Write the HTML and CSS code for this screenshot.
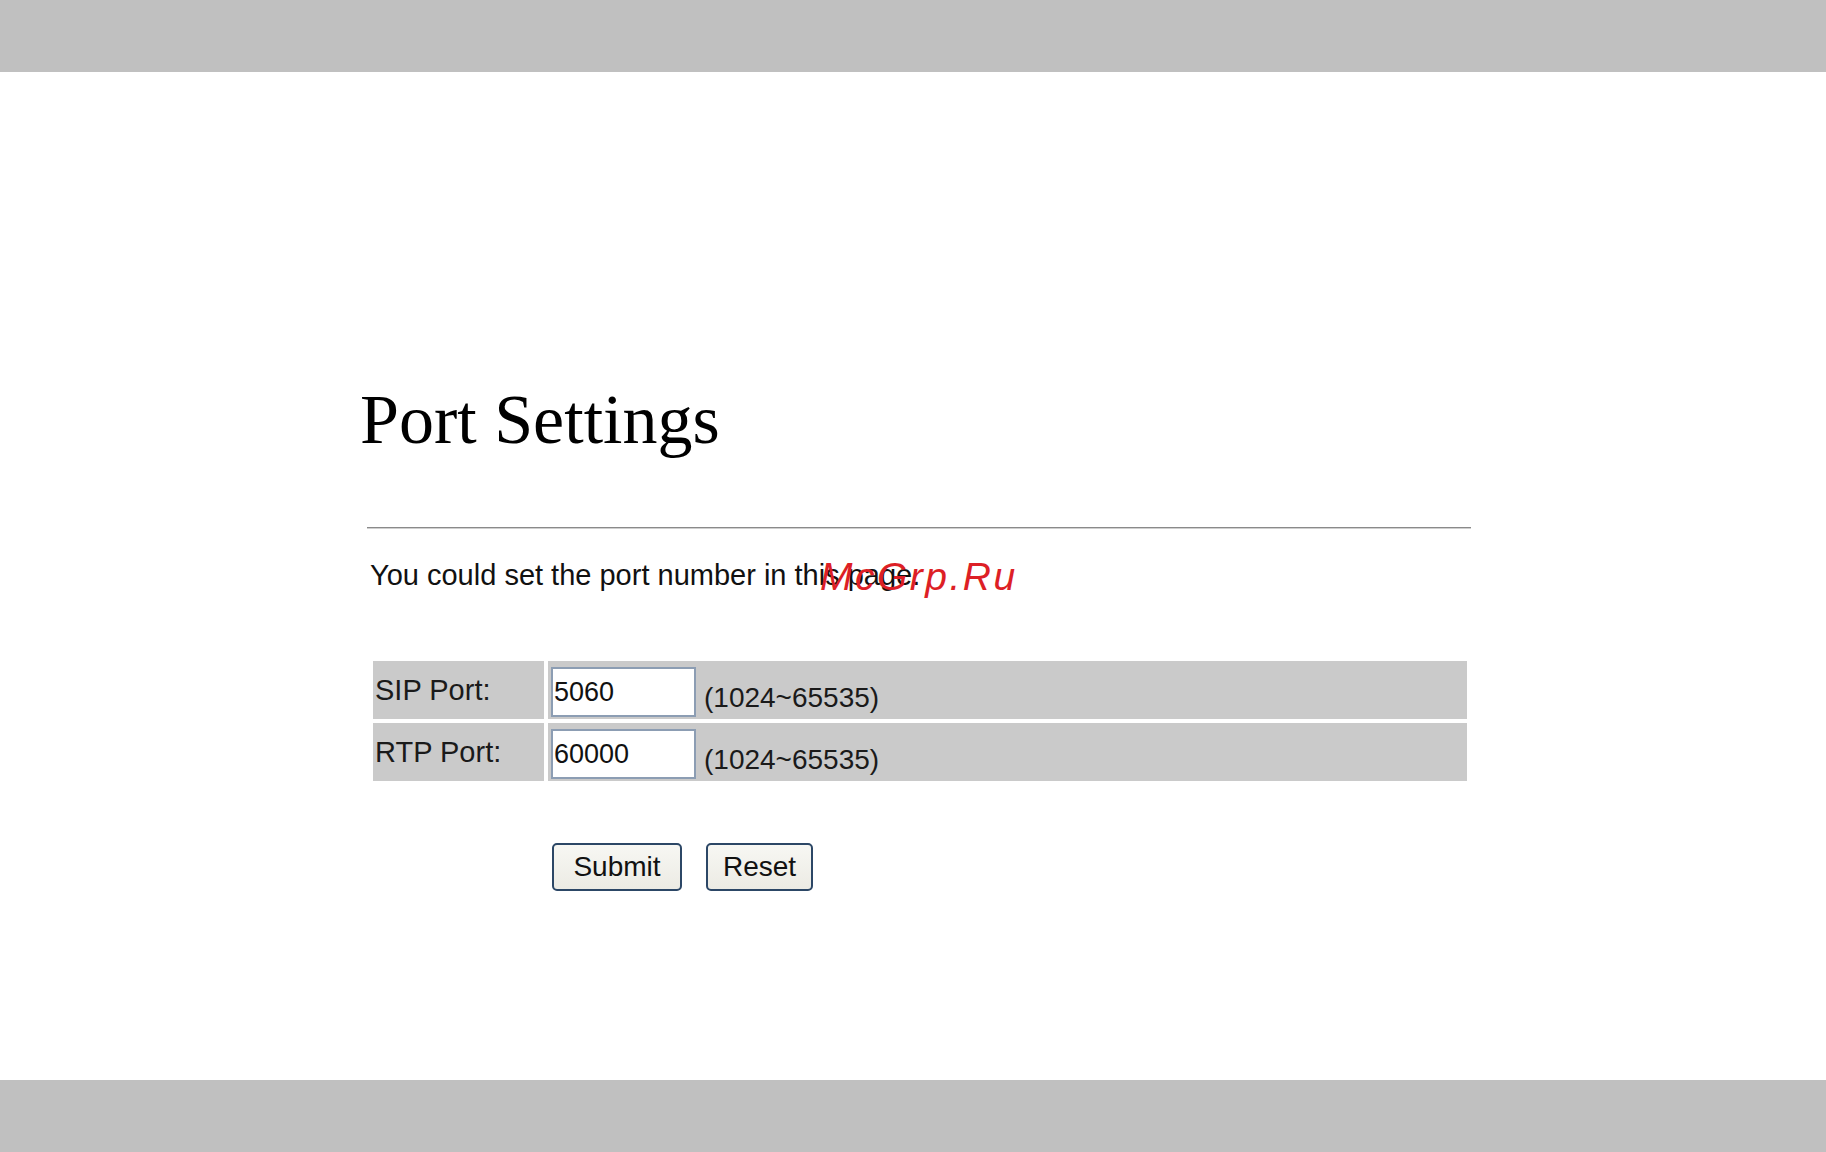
FILE: index.html
```html
<!DOCTYPE html>
<html lang="en">
<head>
    <meta charset="UTF-8">
    <meta name="viewport" content="width=device-width, initial-scale=1.0">
    <title>Port Settings</title>
    <link rel="stylesheet" href="styles.css">
</head>
<body>
    <div class="bar"></div>

    <main class="page">
        <h1 class="title">Port Settings</h1>

        <form class="settings" onsubmit="return false;">
            <hr class="rule">
            <p class="intro">You could set the port number in this page.<span class="mark">McGrp.Ru</span></p>

            <table class="ports">
                <tr>
                    <td class="label">SIP Port:</td>
                    <td class="value">
                        <div class="field">
                            <input type="text" class="port" value="5060">
                            <span class="range">(1024~65535)</span>
                        </div>
                    </td>
                </tr>
                <tr>
                    <td class="label">RTP Port:</td>
                    <td class="value">
                        <div class="field">
                            <input type="text" class="port" value="60000">
                            <span class="range">(1024~65535)</span>
                        </div>
                    </td>
                </tr>
            </table>

            <div class="actions">
                <button type="submit" class="btn btn-submit">Submit</button>
                <button type="reset" class="btn btn-reset">Reset</button>
            </div>
        </form>
    </main>

    <div class="bar"></div>
</body>
</html>
```

FILE: styles.css
```css
html, body {
  margin: 0;
  padding: 0;
  height: 100%;
}

body {
  display: flex;
  flex-direction: column;
  background-color: #fff;
  font-family: "Liberation Sans", Arial, sans-serif;
  color: #111;
}

.bar {
  height: 72px;
  flex: none;
  background-color: #c0c0c0;
}

.page {
  flex: 1;
  padding: 308px 0 0 360px;
}

.title {
  margin: 0;
  font-family: "Liberation Serif", "Times New Roman", serif;
  font-weight: normal;
  font-size: 70px;
  line-height: 80px;
  color: #000;
}

.settings {
  width: 1104px;
  margin: 0 0 0 7px;
}

.rule {
  margin: 67px 0 0 0;
  height: 0;
  border: none;
  border-top: 1px solid #8a8a8a;
  border-bottom: 1px solid #cfcfcf;
}

.intro {
  position: relative;
  margin: 30px 0 0 0;
  padding-left: 3px;
  font-size: 29px;
  line-height: 33px;
  color: #111;
}

/* watermark on top of the text */
.mark {
  position: absolute;
  left: 453px;
  top: -2px;
  font-size: 39px;
  line-height: 39px;
  font-style: italic;
  letter-spacing: 2.5px;
  color: #dd1f26;
}

.ports {
  margin: 65px 0 0 2px;
  width: 1102px;
  border-spacing: 4px;
  border-collapse: separate;
}

.ports td {
  height: 58px;
  padding: 0;
  background-color: #cacaca;
  font-size: 29px;
  color: #1a1a1a;
}

.label {
  width: 169px;
  padding-left: 2px !important;
  vertical-align: middle;
}

.value {
  vertical-align: top;
}

.field {
  display: flex;
  align-items: flex-end;
  gap: 8px;
  padding: 6px 0 0 3px;
}

.port {
  box-sizing: border-box;
  width: 145px;
  height: 50px;
  margin: 0;
  padding: 0 1px;
  border: 2px solid #8c9db3;
  background-color: #fff;
  font-family: "Liberation Sans", Arial, sans-serif;
  font-size: 27px;
  color: #111;
}

.range {
  margin-bottom: 3px;
  font-size: 28px;
  line-height: 33px;
}

.actions {
  display: flex;
  gap: 24px;
  margin: 58px 0 0 185px;
}

.btn {
  box-sizing: border-box;
  height: 48px;
  padding: 0;
  border: 2px solid #2c4766;
  border-radius: 5px;
  background: linear-gradient(#f7f7f3, #ecebe4);
  font-family: "Liberation Sans", Arial, sans-serif;
  font-size: 28px;
  color: #111;
}

.btn-submit {
  width: 130px;
}

.btn-reset {
  width: 107px;
}
```
